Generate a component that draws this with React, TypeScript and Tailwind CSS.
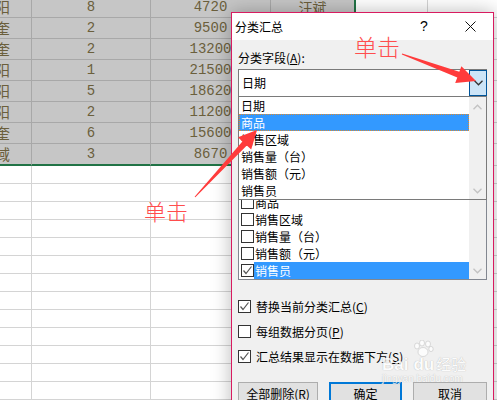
import React from "react";

const gridRows: [string, string, string, string][] = [
  ["阳", "8", "4720", "汪斌"],
  ["奎", "2", "9500", ""],
  ["奎", "2", "13200", ""],
  ["阳", "1", "21500", ""],
  ["阳", "5", "18620", ""],
  ["阳", "2", "11200", ""],
  ["奎", "6", "15600", ""],
  ["域", "3", "8670", ""],
];

const fields = ["日期", "商品", "销售区域", "销售量（台）", "销售额（元）", "销售员"];

function Chevron({ down = true, color = "#333" }: { down?: boolean; color?: string }) {
  return (
    <svg width="9" height="6" viewBox="0 0 9 6" className="block">
      {down ? (
        <polyline points="0.5,0.8 4.5,4.8 8.5,0.8" fill="none" stroke={color} strokeWidth="1.3" />
      ) : (
        <polyline points="0.5,5.2 4.5,1.2 8.5,5.2" fill="none" stroke={color} strokeWidth="1.3" />
      )}
    </svg>
  );
}

function CheckBox({ checked }: { checked: boolean }) {
  return (
    <div className="w-[13px] h-[13px] shrink-0 border border-[#333333] bg-white flex items-center justify-center">
      {checked && (
        <svg width="11" height="11" viewBox="0 0 11 11">
          <polyline points="1.5,5.5 4,8.5 9.5,1.5" fill="none" stroke="#555" strokeWidth="1.2" />
        </svg>
      )}
    </div>
  );
}

export default function App() {
  const cellText = "text-[#6b5f3c] text-[14px] [font-family:'Liberation_Mono',monospace]";
  const cjk = "[font-family:'Noto_Sans_CJK_SC',sans-serif]";
  return (
    <div className="relative w-[497px] h-[400px] overflow-hidden bg-white">
      {/* spreadsheet */}
      <div className="flex flex-col mt-[-3px]">
        {gridRows.map((r, i) => {
          const last = i === gridRows.length - 1;
          const bb = last ? "border-b-2 border-b-[#217346] h-[22px]" : "border-b border-b-[#a8a8a8] h-[21px]";
          return (
            <div key={i} className="flex shrink-0">
              <div className={`w-[120px] ml-[-88px] shrink-0 bg-[#c6c6c6] border-r border-r-[#a8a8a8] ${bb} flex items-center justify-end pr-[21px] text-[15px] text-[#6b5f3c] ${cjk}`}>
                {r[0]}
              </div>
              <div className={`w-[119px] shrink-0 bg-[#c6c6c6] border-r border-r-[#a8a8a8] ${bb} flex items-center justify-center ${cellText}`}>
                {r[1]}
              </div>
              <div className={`w-[120px] shrink-0 bg-[#c6c6c6] border-r border-r-[#a8a8a8] ${bb} flex items-center justify-center ${cellText}`}>
                {r[2]}
              </div>
              <div className={`w-[85px] shrink-0 bg-[#c6c6c6] border-r-2 border-r-[#217346] ${bb} flex items-center justify-center text-[14px] text-[#6b5f3c] ${cjk}`}>
                {r[3]}
              </div>
              <div className={`w-[72px] shrink-0 bg-white border-r border-r-[#d4d4d4] border-b border-b-[#d4d4d4] ${last ? "h-[22px]" : "h-[21px]"}`} />
              <div className={`w-[100px] shrink-0 bg-white border-b border-b-[#d4d4d4] ${last ? "h-[22px]" : "h-[21px]"}`} />
            </div>
          );
        })}
        {Array.from({ length: 13 }).map((_, i) => (
          <div key={"w" + i} className="flex shrink-0 h-[18px]">
            <div className="w-[120px] ml-[-88px] shrink-0 border-r border-b border-[#d4d4d4]" />
            <div className="w-[119px] shrink-0 border-r border-b border-[#d4d4d4]" />
            <div className="w-[120px] shrink-0 border-r border-b border-[#d4d4d4]" />
            <div className="w-[84px] shrink-0 border-r border-b border-[#d4d4d4]" />
            <div className="w-[73px] shrink-0 border-r border-b border-[#d4d4d4]" />
            <div className="w-[100px] shrink-0 border-b border-[#d4d4d4]" />
          </div>
        ))}
      </div>

      {/* dialog */}
      <div className={`absolute left-[231px] top-[12px] w-[263px] h-[410px] border border-[#d81b60] bg-[#f0f0f0] shadow-[0_0_18px_rgba(0,0,0,0.28)] text-[12px] text-black ${cjk}`}>
        <div className="h-[27px] bg-white flex items-center">
          <span className="pl-[3px] leading-none">分类汇总</span>
          <div className="ml-auto w-[46px] h-full flex items-center justify-center text-[14px] [font-family:'Liberation_Sans',sans-serif]">?</div>
          <div className="w-[46px] h-full flex items-center justify-center">
            <svg width="11" height="11" viewBox="0 0 11 11">
              <line x1="0.5" y1="0.5" x2="10.5" y2="10.5" stroke="#111" strokeWidth="1" />
              <line x1="10.5" y1="0.5" x2="0.5" y2="10.5" stroke="#111" strokeWidth="1" />
            </svg>
          </div>
        </div>

        <div className="pl-[6px] pr-[6px] flex flex-col">
          <div className="mt-[9px] h-[17px] leading-[17px]">
            分类字段(<u>A</u>):
          </div>
          {/* combo */}
          <div className="relative mt-[3px] h-[28px] border border-[#7a7a7a] bg-white flex items-center pl-[3px]">
            <span>日期</span>
            <div className="absolute right-[-1px] top-0 bottom-0 w-[18px] border border-[#005499] bg-[#cce4f7] flex items-center justify-center">
              <Chevron />
            </div>
          </div>
          {/* area covered by the open dropdown */}
          <div className="h-[79px] shrink-0" />
          {/* list box */}
          <div className="h-[104px] border border-[#828790] bg-white flex">
            <div className="flex-1 flex flex-col">
              {fields.map((f, i) => {
                const sel = i === fields.length - 1;
                return (
                  <div key={f} className="h-[17px] flex items-center pl-[2px]">
                    <CheckBox checked={sel} />
                    <div className={`flex-1 h-full flex items-center pl-[1px] ${sel ? "bg-[#3399ff] text-white" : ""}`}>{i === 0 ? "" : f}</div>
                  </div>
                );
              })}
            </div>
            <div className="w-[17px] bg-[#f0f0f0] flex flex-col justify-end items-center pb-[5px]">
              <Chevron color="#c2c2c2" />
            </div>
          </div>

          <div className="mt-[18px] h-[17px] flex items-center gap-[5px]">
            <CheckBox checked />
            <span>
              替换当前分类汇总(<u>C</u>)
            </span>
          </div>
          <div className="mt-[8px] h-[17px] flex items-center gap-[5px]">
            <CheckBox checked={false} />
            <span>
              每组数据分页(<u>P</u>)
            </span>
          </div>
          <div className="mt-[8px] h-[17px] flex items-center gap-[5px]">
            <CheckBox checked />
            <span>
              汇总结果显示在数据下方(<u>S</u>)
            </span>
          </div>

          <div className="mt-[17px] flex gap-[11px]">
            <div className="w-[80px] h-[23px] bg-[#e1e1e1] border border-[#adadad] flex items-center justify-center">
              全部删除(<u>R</u>)
            </div>
            <div className="w-[73px] h-[23px] bg-[#e1e1e1] border-2 border-[#0078d7] flex items-center justify-center">确定</div>
            <div className="w-[74px] h-[23px] bg-[#e1e1e1] border border-[#adadad] flex items-center justify-center">取消</div>
          </div>
        </div>

        {/* dropdown list overlay */}
        <div className="absolute left-[6px] top-[83px] w-[249px] h-[104px] border border-[#7a7a7a] bg-white flex">
          <div className="flex-1 flex flex-col">
            {fields.map((f, i) => (
              <div
                key={f}
                className={`h-[17px] flex items-center pl-[2px] ${i === 1 ? "bg-[#3399ff] text-white outline-1 outline-dotted outline-[#e08a2c] -outline-offset-1" : ""}`}
              >
                {f}
              </div>
            ))}
          </div>
          <div className="w-[17px] bg-[#f0f0f0] flex flex-col justify-between items-center pt-[7px] pb-[5px]">
            <Chevron down={false} color="#c2c2c2" />
            <Chevron color="#c2c2c2" />
          </div>
        </div>

        {/* watermark */}
        <div className="absolute left-[150px] top-[327px] w-[90px] h-[46px] pointer-events-none text-white [text-shadow:0_0_1px_#9a9a9a] opacity-80">
          <svg width="22" height="18" viewBox="0 0 22 18" className="absolute left-[30px] top-0">
            <ellipse cx="5" cy="6" rx="2.5" ry="3" fill="#fff" stroke="#bbb" strokeWidth="0.6" />
            <ellipse cx="10" cy="3" rx="2.5" ry="3" fill="#fff" stroke="#bbb" strokeWidth="0.6" />
            <ellipse cx="16" cy="4" rx="2.5" ry="3" fill="#fff" stroke="#bbb" strokeWidth="0.6" />
            <ellipse cx="19" cy="9" rx="2.2" ry="2.6" fill="#fff" stroke="#bbb" strokeWidth="0.6" />
            <ellipse cx="11" cy="12" rx="5" ry="4.5" fill="#fff" stroke="#bbb" strokeWidth="0.6" />
          </svg>
          <div className="absolute left-0 top-[16px] flex items-baseline text-[17px] leading-none font-bold [font-family:'Liberation_Sans',sans-serif]">
            <span>Bai</span>
            <span className="ml-[5px]">du</span>
            <span className={`ml-[2px] text-[15px] font-normal ${cjk}`}>经验</span>
          </div>
          <div className="absolute left-0 top-[34px] text-[10px] leading-none [font-family:'Liberation_Sans',sans-serif]">jingyan.baidu.com</div>
        </div>
      </div>

      {/* annotations */}
      <div className={`absolute left-[354px] top-[35px] text-[23px] leading-none font-light text-[#ff4d4d] ${cjk}`}>单击</div>
      <div className={`absolute left-[144px] top-[199px] text-[22px] leading-none font-light text-[#ff4d4d] ${cjk}`}>单击</div>
      <svg className="absolute left-0 top-0 pointer-events-none" width="497" height="400" viewBox="0 0 497 400">
        <polygon
          points="402.17,53.53 459.3,71.8 461.4,66.2 476,81 455.2,83.0 457.3,77.4 401.83,54.47"
          fill="#ff3b3b"
        />
        <polygon
          points="195.37,197.34 246.8,145.4 251.2,149.5 257,130 238.0,137.3 242.4,141.4 194.63,196.66"
          fill="#ff3b3b"
        />
      </svg>
    </div>
  );
}
